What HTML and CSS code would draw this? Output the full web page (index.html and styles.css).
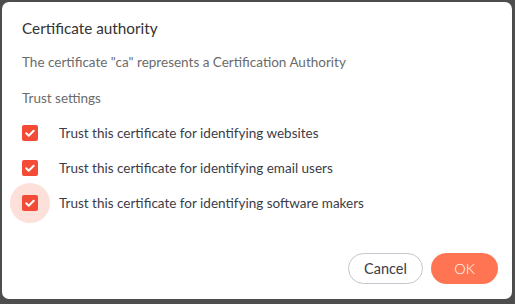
FILE: index.html
```html
<!DOCTYPE html>
<html>
<head>
  <meta charset="utf-8">
  <link rel="stylesheet" href="styles.css">
</head>
<body>
<div class="dialog">
  <h1 class="title">Certificate authority</h1>
  <p class="desc">The certificate "ca" represents a Certification Authority</p>
  <p class="section">Trust settings</p>
  <div class="options">
    <label class="option">
      <span class="box"><svg viewBox="0 0 16 16"><path d="M4.2 8.3l2.5 2.4 5-5"/></svg></span>
      <span>Trust this certificate for identifying websites</span>
    </label>
    <label class="option">
      <span class="box"><svg viewBox="0 0 16 16"><path d="M4.2 8.3l2.5 2.4 5-5"/></svg></span>
      <span>Trust this certificate for identifying email users</span>
    </label>
    <label class="option focused">
      <span class="box"><svg viewBox="0 0 16 16"><path d="M4.2 8.3l2.5 2.4 5-5"/></svg></span>
      <span>Trust this certificate for identifying software makers</span>
    </label>
  </div>
  <div class="actions">
    <button class="btn cancel">Cancel</button>
    <button class="btn ok">OK</button>
  </div>
</div>
</body>
</html>
```

FILE: styles.css
```css
html, body {
  margin: 0;
  height: 100%;
  background: #4d4d4d;
  font-family: Lato, "Noto Sans", sans-serif;
}
body {
  padding: 2px 3px 5px 2px;
  box-sizing: border-box;
}
.dialog {
  height: 100%;
  background: white;
  border-radius: 7px;
  padding: 0 14px 0 20px;
  box-sizing: border-box;
  display: flex;
  flex-direction: column;
}
.title {
  margin: 16px 0 0 0;
  font-size: 15.3px;
  font-weight: normal;
  color: #333;
  line-height: 20px;
}
.desc {
  margin: 15px 0 0 0;
  font-size: 13.5px;
  color: #6b6b6b;
  line-height: 18px;
}
.section {
  margin: 18px 0 0 0;
  font-size: 13.5px;
  color: #6b6b6b;
  line-height: 18px;
}
.options {
  display: flex;
  flex-direction: column;
  gap: 17px;
  margin-top: 17px;
}
.option {
  display: flex;
  align-items: center;
  gap: 21px;
  font-size: 13.5px;
  color: #3c3c46;
  line-height: 18px;
  position: relative;
}
.box {
  width: 16px;
  height: 16px;
  background: #f44b36;
  border-radius: 2px;
  display: flex;
  position: relative;
  z-index: 1;
}
.box svg {
  width: 16px;
  height: 16px;
  fill: none;
  stroke: white;
  stroke-width: 2;
  stroke-linecap: round;
  stroke-linejoin: round;
}
.focused::before {
  content: "";
  position: absolute;
  left: -12px;
  top: 50%;
  width: 40px;
  height: 40px;
  margin-top: -20px;
  border-radius: 50%;
  background: #fde0da;
}
.actions {
  margin-top: auto;
  margin-bottom: 15px;
  display: flex;
  justify-content: flex-end;
  gap: 8px;
}
.btn {
  font-family: inherit;
  font-size: 14.5px;
  height: 31px;
  border-radius: 16px;
  cursor: pointer;
}
.cancel {
  width: 75px;
  background: white;
  border: 1px solid #c6c6ce;
  color: #3c3c46;
}
.ok {
  width: 67px;
  background: #ff7553;
  border: none;
  color: white;
  font-weight: 300;
}
```
